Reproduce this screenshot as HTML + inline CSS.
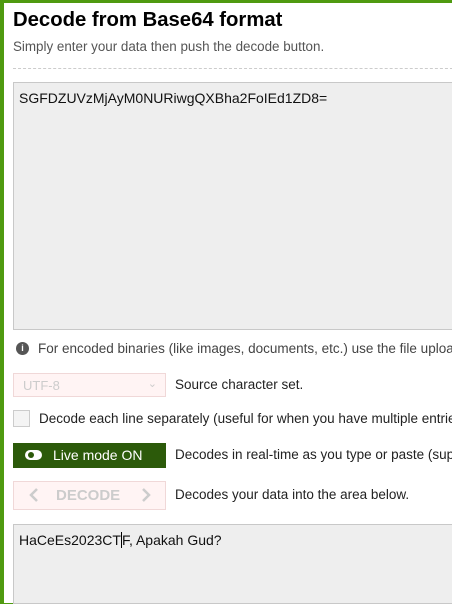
<!DOCTYPE html>
<html><head><style>
*{margin:0;padding:0;box-sizing:border-box}
body{width:452px;height:584px;overflow:hidden;background:#4f9a10;font-family:"Liberation Sans",sans-serif;position:relative}
.page{position:absolute;left:4px;top:3px;width:460px;height:600px;background:#fff}
.a{position:absolute;white-space:nowrap}
h1{position:absolute;left:13px;top:9px;font-size:20.3px;font-weight:bold;color:#000}
.ta{position:absolute;left:13px;border:1px solid #c8c8c8;background:#eee;width:460px;font-size:14px;color:#111;padding:7px 5px}
.t{font-size:13.5px;color:#222}
</style></head><body>
<div class="page"></div>
<h1>Decode from Base64 format</h1>
<div class="a" style="left:13px;top:39px;font-size:13.4px;color:#555">Simply enter your data then push the decode button.</div>
<div class="a" style="left:13px;top:68px;width:450px;border-top:1px dashed #ccc"></div>
<div class="ta" style="top:82px;height:248px">SGFDZUVzMjAyM0NURiwgQXBha2FoIEd1ZD8=</div>
<div class="a" style="left:16px;top:342px;width:13px;height:13px;border-radius:50%;background:#555;color:#fff;font-size:9px;font-weight:bold;text-align:center;line-height:13px">i</div>
<div class="a t" style="left:38px;top:341px;color:#444">For encoded binaries (like images, documents, etc.) use the file upload</div>
<div class="a" style="left:13px;top:373px;width:153px;height:24px;border:1px solid #f0d8d8;background:#fff4f4;color:#ccc;font-size:13px;padding:4px 9px">UTF-8<span style="position:absolute;right:8px;top:3px;color:#ccc;font-size:11px">&#8964;</span></div>
<div class="a t" style="left:175px;top:377px">Source character set.</div>
<div class="a" style="left:13px;top:410px;width:17px;height:17px;border:1px solid #ccc;background:#f4f4f4"></div>
<div class="a t" style="left:39px;top:411px">Decode each line separately (useful for when you have multiple entries</div>
<div class="a" style="left:13px;top:443px;width:153px;height:25px;background:#2c5a0a;color:#fff;font-size:14px;padding:4px 0 0 40px">Live mode ON</div>
<div class="a" style="left:25px;top:450px;width:17px;height:10px;border-radius:5px;background:#fff"><div style="position:absolute;left:3px;top:2px;width:6px;height:6px;border-radius:50%;background:#2c5a0a"></div></div>
<div class="a t" style="left:175px;top:447px">Decodes in real-time as you type or paste (sup</div>
<div class="a" style="left:13px;top:481px;width:153px;height:29px;border:1px solid #f0d8d8;background:#fff4f4;color:#ccc;font-size:15px;font-weight:bold;padding:5px 0 0 42px">DECODE</div>
<svg class="a" style="left:28px;top:488px" width="12" height="14"><path d="M9 1L3 7L9 13" stroke="#ccc" stroke-width="2.5" fill="none"/></svg>
<svg class="a" style="left:140px;top:488px" width="12" height="14"><path d="M3 1L9 7L3 13" stroke="#ccc" stroke-width="2.5" fill="none"/></svg>
<div class="a t" style="left:175px;top:487px">Decodes your data into the area below.</div>
<div class="ta" style="top:524px;height:80px">HaCeEs2023CT<span style="display:inline-block;width:1px;height:16px;background:#000;vertical-align:-3px"></span>F, Apakah Gud?</div>
</body></html>
